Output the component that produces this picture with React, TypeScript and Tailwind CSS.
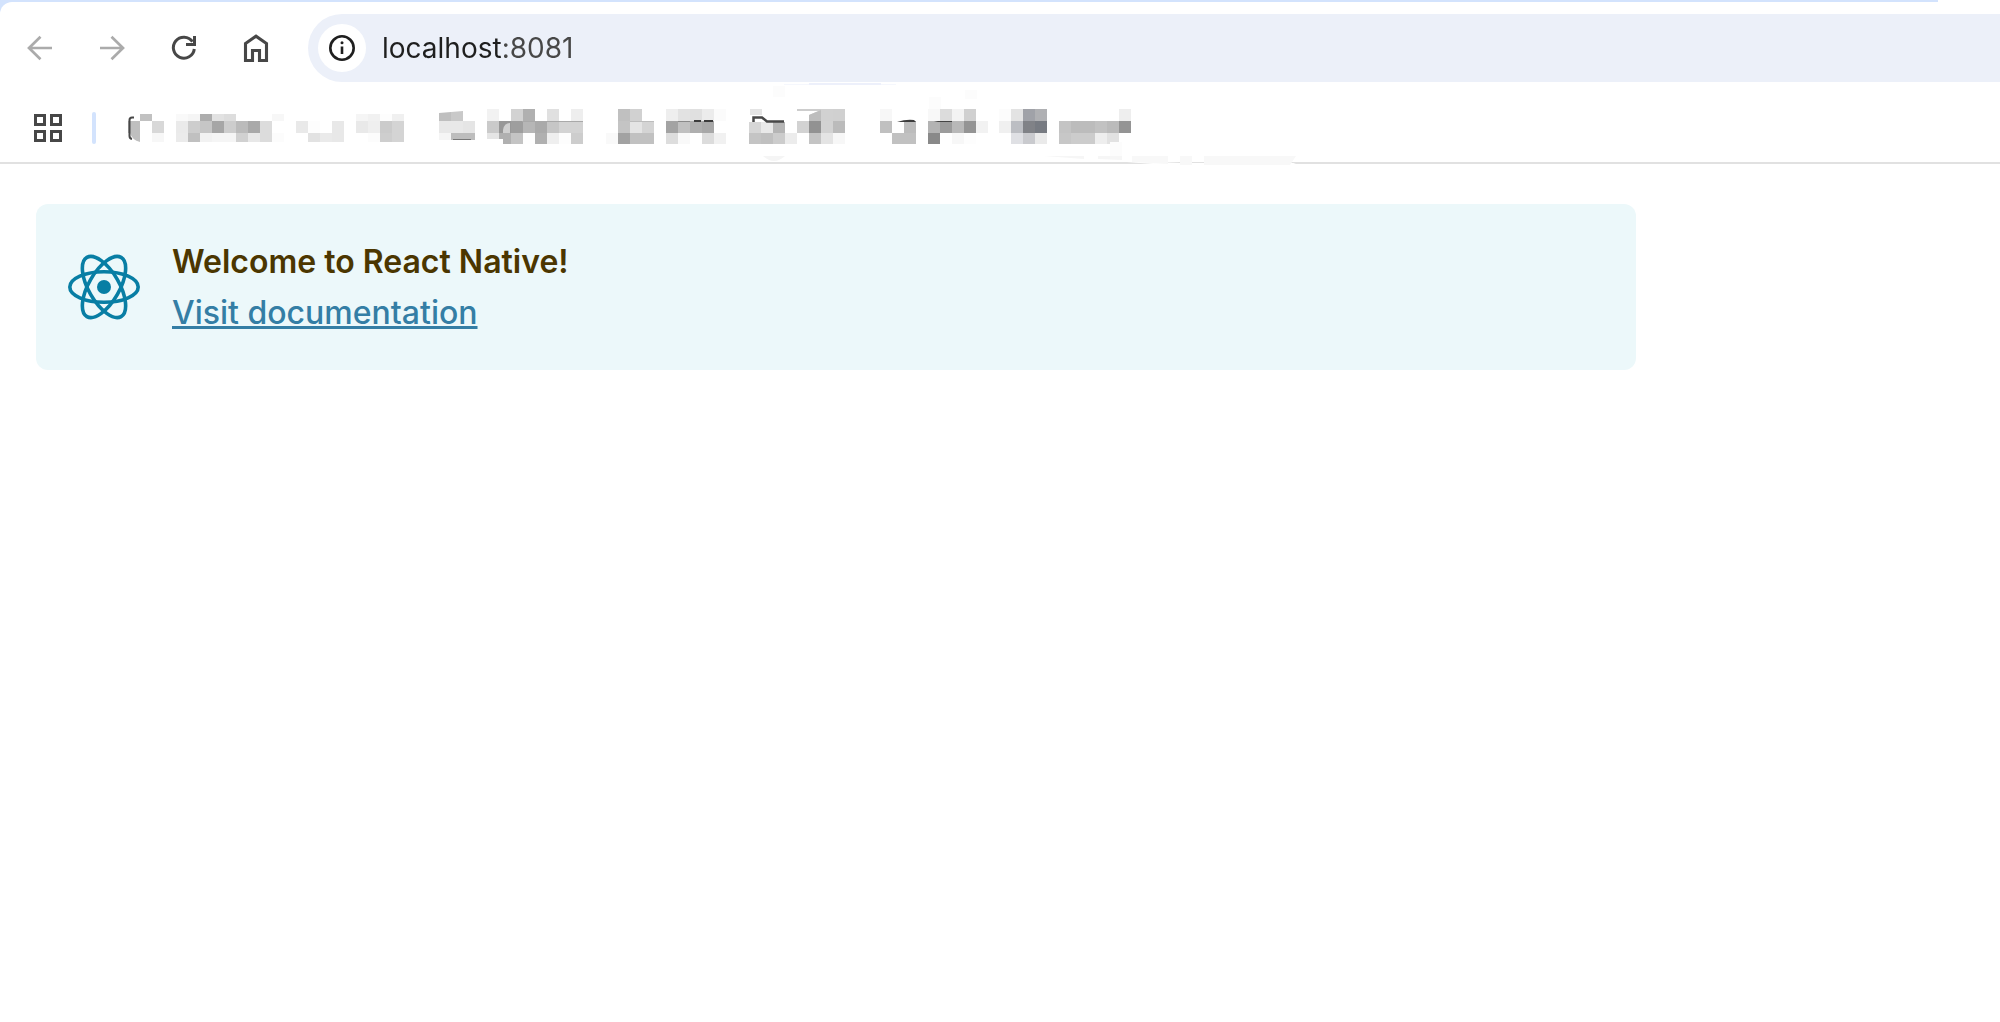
import type { ReactNode } from 'react';

const CELL = 12;

interface Bookmark {
  name: string;
  // one entry per row, cells separated by spaces; "-" is an empty cell
  rows: string[];
  top?: number;
  bottom?: number;
  detail?: ReactNode;
}

const bookmarks: Bookmark[] = [
  {
    name: 'Bookmark folder 1',
    top: 5,
    bottom: 33,
    rows: [
      '- c1 - - f9 f5 ad e2 dd - - - f7 - - - - - - f5 f1 fd f0 - -',
      'bf - d8 - ea cd c6 a6 cd bb a9 dc - - e9 fd - e8 - e9 ef cb d4 - -',
      '- - f7 - eb c0 f2 f5 f5 d1 e8 dc fc - - e2 ea e8 - - fc ce d4 - -',
    ],
    detail: (
      <>
        <path d="M2 24 H12 V33 Q4 31 2 24 Z" fill="#bfbfbf" />
        <path d="M6 8.500 H4 Q1.500 8.500 1.500 11 V27 Q1.500 29.500 4 30" fill="none" stroke="#474747" strokeWidth="2" />
      </>
    ),
  },
  {
    name: 'Bookmark folder 2',
    rows: [
      'bf c9 - - f2 - d2 b0 - e0 - ee -',
      'e8 e8 e5 - ca 98 9e b6 aa c6 d3 d3 -',
      'f5 bd bd - e5 b0 c4 fe b0 ef fd cd -',
    ],
    detail: (
      <>
        <path d="M0 0 H24 V2 L0 4 Z M0 31 H36 V36 H0 Z M47 30 H64 V36 H47 Z" fill="#fff" />
        <path d="M64 24 V21 Q65 14 71 14 V24 Z" fill="#d0d0d0" />
        <path d="M14 30.500 H32" stroke="#777" />
        <path d="M83 12.500 H144" stroke="#a9a9a9" />
      </>
    ),
  },
  {
    name: 'Bookmark folder 3',
    rows: [
      '- c0 d1 - - ee e2 e0 ec fb -',
      '- c4 e4 d4 - a3 c0 af a8 - -',
      'f9 a2 c1 c1 - dd f9 - dc f1 -',
    ],
    detail: (
      <>
        <path d="M24 12.500 H48" stroke="#bdbdbd" />
        <path d="M72 12.500 H84" stroke="#8a8a8a" />
        <path d="M88 12 H95 M98 12 H107" stroke="#3c3c3c" strokeWidth="2" />
      </>
    ),
  },
  {
    name: 'Bookmark folder 4',
    rows: [
      '- - - - - - d1 d0 - -',
      'd6 e9 b5 - d2 92 d2 bb - -',
      'c4 c0 cc ec - c4 e4 f7 - -',
    ],
    detail: (
      <>
        <rect x="1" y="0" width="12" height="6" fill="#e4e4e4" />
        <rect x="0" y="11" width="36" height="2" fill="#fff" />
        <path d="M4.500 13 V8.500 H13 L18 12.500 H35" fill="none" stroke="#474747" strokeWidth="2.500" />
        <path d="M48 2 L72 0 V1 L60 6 V12 H72 V1 Z" fill="#d0d0d0" />
        <path d="M48 0 H72 V2 H48 Z" fill="#cdcdcd" />
        <path d="M60 12 V6 L72 1 V12 Z" fill="#bdbdbd" />
      </>
    ),
  },
  {
    name: 'Bookmark folder 5',
    rows: [
      'f7 - - - f8 dc f3 d0 -',
      'c0 - bc - b3 9c b8 94 f2',
      '- c1 c1 - 89 - f7 fd -',
    ],
    detail: (
      <>
        <path d="M17 13 Q26 10 34 11 L36 13 Z" fill="#3c3c3c" />
        <path d="M54 12 H72 V13 H58 Z" fill="#444" />
      </>
    ),
  },
  {
    name: 'Bookmark folder 6',
    rows: [
      'fc e3 a0a2a8 afb0b3 - - - - - - ee',
      'f0 bcbec3 808287 777b82 - c4 bc bc c2 bb 94',
      '- dfe0e4 c9cace ea - c7 cc cc ee e2 -',
    ],
  },
];

function toColor(cell: string) {
  return cell.length === 2 ? `#${cell}${cell}${cell}` : `#${cell}`;
}

function Mosaic({ rows, top = 0, bottom = 35, detail }: Bookmark) {
  const cols = rows[0].split(' ').length;
  return (
    <svg width={cols * CELL} height={38} shapeRendering="crispEdges" aria-hidden="true">
      {rows.map((row, r) => {
        const y0 = Math.max(r * CELL, top);
        const y1 = Math.min((r + 1) * CELL, bottom);
        return row.split(' ').map((cell, c) =>
          cell === '-' ? null : (
            <rect key={`${r}-${c}`} x={c * CELL} y={y0} width={CELL} height={y1 - y0} fill={toColor(cell)} />
          ),
        );
      })}
      <g shapeRendering="auto">{detail}</g>
    </svg>
  );
}

function NavButton({ label, disabled, children }: { label: string; disabled?: boolean; children: ReactNode }) {
  return (
    <button
      type="button"
      aria-label={label}
      disabled={disabled}
      className="flex size-14 items-center justify-center rounded-full text-[#474747] disabled:text-[#ababab]"
    >
      <svg width="28" height="28" viewBox="0 0 28 28" fill="none" stroke="currentColor" aria-hidden="true">
        {children}
      </svg>
    </button>
  );
}

function Toolbar() {
  return (
    <div className="flex items-center rounded-tl-[12px] bg-white py-3 pl-3">
      <nav className="flex gap-4">
        <NavButton label="Back" disabled>
          <path d="M26 14 H3.500 M14.500 2.700 L3 14 L14.500 25.300" strokeWidth="2.700" />
        </NavButton>
        <NavButton label="Forward" disabled>
          <path d="M2 14 H24.500 M13.500 2.700 L25 14 L13.500 25.300" strokeWidth="2.700" />
        </NavButton>
        <NavButton label="Reload">
          <path d="M24.300 15 A10.500 10.500 0 1 1 22.500 7.700 M24.500 2 V10.500 H16" strokeWidth="3" />
        </NavButton>
        <NavButton label="Home">
          <path d="M3.500 26.500 V9.500 L14 2.200 L24.500 9.500 V26.500 H17.500 V16.500 H10.500 V26.500 Z" strokeWidth="3.100" />
        </NavButton>
      </nav>
      <div className="ml-6 flex h-[68px] flex-1 items-center rounded-l-full bg-[#ecf0f9] pl-[10px]">
        <button
          type="button"
          aria-label="View site information"
          className="flex size-12 items-center justify-center rounded-full bg-white text-[#1f1f1f]"
        >
          <svg width="26" height="26" viewBox="0 0 26 26" fill="none" stroke="currentColor" aria-hidden="true">
            <circle cx="13" cy="13" r="11.700" strokeWidth="2.600" />
            <path d="M13 11.500 V19" strokeWidth="2.600" />
            <circle cx="13" cy="7.800" r="1.500" fill="currentColor" stroke="none" />
          </svg>
        </button>
        <input
          type="text"
          aria-label="Address"
          defaultValue="localhost:8081"
          className="ml-4 h-12 min-w-0 flex-1 bg-[linear-gradient(90deg,#1f1f1f_119px,#474747_119px)] bg-clip-text font-['Inter',sans-serif] text-[28px] text-transparent caret-[#1f1f1f] outline-none"
        />
      </div>
    </div>
  );
}

function BookmarksBar() {
  return (
    <div className="relative flex h-[70px] items-center border-b-2 border-[#e1e1e1] bg-white pl-[34px]">
      <button type="button" aria-label="All tabs">
        <svg width="28" height="28" viewBox="0 0 28 28" fill="none" stroke="#474747" strokeWidth="3" aria-hidden="true">
          <path d="M1.500 1.500 H10.500 V10.500 H1.500 Z M17.500 1.500 H26.500 V10.500 H17.500 Z M1.500 17.500 H10.500 V26.500 H1.500 Z M17.500 17.500 H26.500 V26.500 H17.500 Z" />
        </svg>
      </button>
      <div className="ml-[30px] h-8 w-1 rounded-full bg-[#d3e3fd]" />
      <div className="ml-8 flex gap-[11px]">
        {bookmarks.map((b) => (
          <button key={b.name} type="button" aria-label={b.name}>
            <Mosaic {...b} />
          </button>
        ))}
      </div>
      {/* smudges above and below the row */}
      <svg
        className="pointer-events-none absolute -top-3 left-[760px]"
        width="536"
        height="84"
        viewBox="0 0 536 84"
        aria-hidden="true"
      >
        <path d="M24 2 H49 V1 H121 V2 H136 V3 H24 Z" fill="#f5f7fd" />
        <path d="M49 1 H121 V3 H49 Z" fill="#edf0fb" />
        <path d="M13 4 H25 V15 H13 Z M205 8 H217 V17 H205 Z M169 15 H181 V27 H169 Z M350 60 H362 V76 H350 Z" fill="#fcfcfc" />
        <path d="M3 74 H25 Q14 84 3 74 Z" fill="#f5f5f5" />
        <path d="M340 78 L420 80 L396 81 H536 L528 84 H420 Z" fill="#fff" />
        <path d="M284 74 H324 V77 Z M338 74 H362 V78 L338 77 Z" fill="#f6f6f6" />
        <path d="M372 74 H408 V82 L372 80 Z M420 74 H432 V83 H420 Z M444 74 H536 L530 83 H444 Z" fill="#f8f8f8" />
      </svg>
    </div>
  );
}

function ReactLogo() {
  return (
    <svg width="72" height="66" viewBox="-36 -33 72 66" fill="none" stroke="#087ea4" strokeWidth="3.600" aria-hidden="true">
      <circle r="7" fill="#087ea4" stroke="none" />
      <ellipse rx="34.200" ry="15.300" />
      <ellipse rx="34.200" ry="15.300" transform="rotate(60)" />
      <ellipse rx="34.200" ry="15.300" transform="rotate(120)" />
    </svg>
  );
}

export default function App() {
  return (
    <div className="min-h-screen bg-white">
      <header className="bg-[#d3e3fd]">
        <div className="flex h-0.5 justify-end">
          <div className="w-[62px] bg-white" />
        </div>
        <Toolbar />
        <BookmarksBar />
      </header>
      <main className="px-9 pt-10">
        <section className="flex w-[80vw] items-center gap-8 rounded-xl bg-[#ecf8fa] p-8 font-['Inter',sans-serif] text-[32px] leading-[51px]">
          <ReactLogo />
          <div>
            <h1 className="font-semibold text-[#4b3600]">Welcome to React Native!</h1>
            <a
              href="https://reactnative.dev/"
              className="font-medium text-[#347ea5] underline decoration-[3px] underline-offset-2"
            >
              Visit documentation
            </a>
          </div>
        </section>
      </main>
    </div>
  );
}
